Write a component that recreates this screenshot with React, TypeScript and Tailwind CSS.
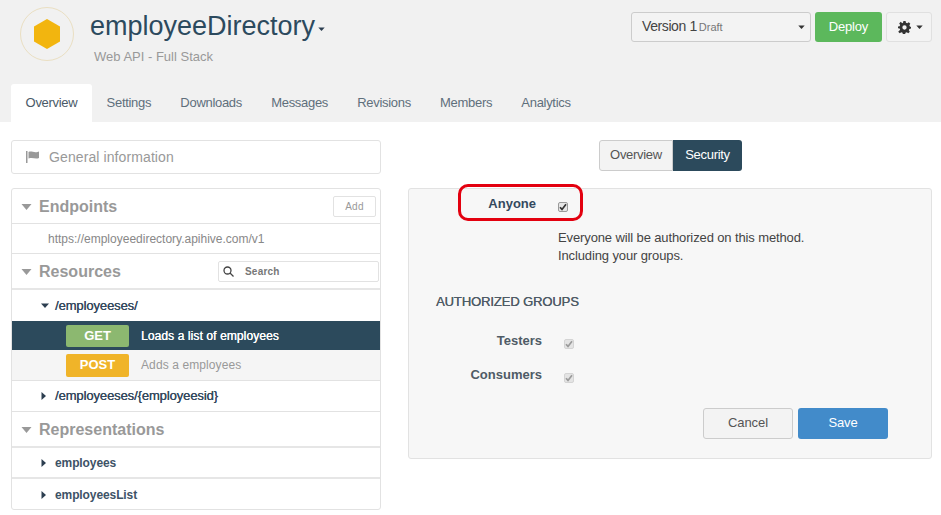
import React from "react";

const Caret = ({ dir = "down", className = "" }: { dir?: "down" | "right"; className?: string }) =>
  dir === "down" ? (
    <svg width="8" height="5" viewBox="0 0 8 5" className={className}><path d="M0 0.5h8L4 5z" fill="currentColor" /></svg>
  ) : (
    <svg width="5" height="8" viewBox="0 0 5 8" className={className}><path d="M0.5 0v8L5 4z" fill="currentColor" /></svg>
  );

const SectionCaret = () => (
  <svg width="11" height="6" viewBox="0 0 11 6" className="text-[#999]"><path d="M0.5 0h10L5.500 6z" fill="currentColor" /></svg>
);

const Check = ({ disabled }: { disabled?: boolean }) => (
  <span className={`flex h-[10px] w-[10px] items-center justify-center rounded-[2px] border ${disabled ? "border-[#d4d4d4] bg-[#e4e4e4]" : "border-[#9a9a9a] bg-[#e6e6e6]"}`}>
    <svg width="8" height="8" viewBox="0 0 8 8"><path d="M1 4.200 3 6.400 7 1.200" fill="none" stroke={disabled ? "#9b9b9b" : "#333"} strokeWidth="1.700" /></svg>
  </span>
);

const tabs = ["Overview", "Settings", "Downloads", "Messages", "Revisions", "Members", "Analytics"];

const Tree = ({ label, open, bold }: { label: string; open?: boolean; bold?: boolean }) => (
  <div className="flex h-full items-center pl-[29px] text-[#34495e]">
    <span className="flex w-[14px] items-center text-[#2c3e50]"><Caret dir={open ? "down" : "right"} /></span>
    <span className={bold ? "text-[12px] font-bold tracking-[-0.1px] text-[#3d5266]" : "text-[13px] tracking-[-0.1px] [text-shadow:0.2px_0_0_#34495e]"}>{label}</span>
  </div>
);

const SectionTitle = ({ label }: { label: string }) => (
  <div className="flex items-center pt-[1px]">
    <span className="ml-[9px] flex w-[18px]"><SectionCaret /></span>
    <span className="text-[16px] font-bold text-[#999]">{label}</span>
  </div>
);

export default function App() {
  return (
    <div className="h-[515px] w-[941px] overflow-hidden bg-white font-['Liberation_Sans',Arial,sans-serif] text-[#333]">
      <header className="h-[122px] bg-[#f1f1f1]">
        <div className="flex h-[84px]">
          <div className="ml-[20px] mt-[7px] flex h-[54px] w-[54px] items-center justify-center rounded-full border border-[#eadfc2]">
            <svg width="26" height="30" viewBox="0 0 26 30"><path d="M13 0 26 7.500v15L13 30 0 22.500V7.500z" fill="#f2b50f" /></svg>
          </div>
          <div className="ml-[16px] flex flex-col">
            <div className="mt-[8px] flex items-center">
              <span className="text-[27px] leading-[36px] text-[#2c4a5e]">employeeDirectory</span>
              <span className="ml-[3px] mt-[5px] text-[#2c3e50]"><Caret className="h-[4px] w-[7px]" /></span>
            </div>
            <span className="ml-[4px] mt-[4px] text-[13px] leading-[18px] text-[#999]">Web API - Full Stack</span>
          </div>
          <div className="ml-auto mr-[9px] mt-[12px] flex h-[30px] gap-[4px]">
            <div className="flex w-[180px] items-center rounded-[3px] border border-[#ccc] bg-[#f3f3f3] pb-[1px] pl-[10px] pr-[5px]">
              <span className="text-[14px] tracking-[-0.4px] text-[#444]">Version 1</span>
              <span className="ml-[2px] mt-[1px] text-[11px] text-[#777]">Draft</span>
              <span className="ml-auto text-[#333]"><Caret className="h-[4px] w-[7px]" /></span>
            </div>
            <div className="flex w-[67px] items-center justify-center rounded-[3px] bg-[#5cb85c] text-[13px] tracking-[-0.2px] text-white">Deploy</div>
            <div className="flex w-[46px] items-center justify-center gap-[5px] rounded-[3px] border border-[#e0e0e0] bg-[#f3f3f3] pl-[2px] text-[#333]">
              <svg width="13" height="13" viewBox="0 0 24 24" fill="#333"><path fillRule="evenodd" d="M10 0h4l.7 3.300 2.300 1 2.900-1.800 2.800 2.800L21 8l1 2.300 2 .7v3l-3 .7-1 2.300 1.800 2.900-2.800 2.800-2.900-1.800-2.300 1-.7 3.100h-4l-.7-3.100-2.300-1-2.900 1.800-2.800-2.800L4 16.300l-1-2.300-3-.7v-3l3-.7 1-2.300-1.800-2.900 2.800-2.800L7.900 4.300l1.400-1zM12 8a4 4 0 1 0 0 8 4 4 0 0 0 0-8z" /></svg>
              <Caret className="h-[4px] w-[7px]" />
            </div>
          </div>
        </div>
        <nav className="flex h-[38px] pl-[11px] text-[13px] tracking-[-0.3px] text-[#5f6f7c]">
          {tabs.map((t, i) => (
            <div key={t} className={`flex items-center rounded-t-[3px] ${i === 0 ? "w-[81px] justify-center bg-white text-[#4a5a68]" : "px-[14.600px]"}`}>{t}</div>
          ))}
        </nav>
      </header>

      <main className="flex pl-[11px] pt-[18px]">
        <aside className="w-[370px]">
          <div className="flex h-[34px] items-center rounded-[3px] border border-[#e2e2e2] pl-[14px] text-[14px] tracking-[0.1px] text-[#999]">
            <svg width="14" height="12" viewBox="0 0 14 12" fill="#999"><path d="M0 0h1.500v12H0zM2.500 1c3-1.500 5 1 9 0l1.500-.5V7c-4 1.500-6-1-10.500.5z" /></svg>
            <span className="ml-[9px]">General information</span>
          </div>
          <div className="mt-[14px] h-[322px] overflow-hidden rounded-[3px] border border-[#e2e2e2]">
            <div className="flex h-[35px] items-center justify-between border-b border-[#e2e2e2] pr-[4px]">
              <SectionTitle label="Endpoints" />
              <div className="flex h-[21px] w-[43px] items-center justify-center rounded-[2px] border border-[#e2e2e2] text-[10px] tracking-[0.3px] text-[#999]">Add</div>
            </div>
            <div className="flex h-[30px] items-center border-b border-[#e2e2e2] pl-[36px] text-[12px] text-[#888]">https://employeedirectory.apihive.com/v1</div>
            <div className="flex h-[36px] items-center justify-between border-b-[2px] border-[#e6e6e6] pr-[1px]">
              <SectionTitle label="Resources" />
              <div className="flex h-[21px] w-[161px] items-center rounded-[2px] border border-[#e2e2e2] pl-[4px] text-[10px] font-bold tracking-[0.2px] text-[#777]">
                <svg width="11" height="11" viewBox="0 0 11 11" fill="none" stroke="#444" strokeWidth="1.300"><circle cx="4.500" cy="4.500" r="3.500" /><path d="M7 7l3.500 3.500" /></svg>
                <span className="ml-[11px]">Search</span>
              </div>
            </div>
            <div className="h-[31px]"><Tree label="/employeeses/" open /></div>
            <div className="flex h-[29px] items-center bg-[#2c4a5c] pl-[54px]">
              <span className="flex h-[22px] w-[63px] items-center justify-center rounded-[2px] bg-[#8cb870] text-[13px] font-bold text-white">GET</span>
              <span className="ml-[12px] text-[12px] tracking-[0.1px] text-white [text-shadow:0.2px_0_0_#fff]">Loads a list of employees</span>
            </div>
            <div className="flex h-[31px] items-center border-b border-[#e2e2e2] bg-[#f5f5f5] pl-[54px]">
              <span className="flex h-[23px] w-[63px] items-center justify-center rounded-[2px] bg-[#f0b429] pb-[1px] text-[13px] font-bold text-white">POST</span>
              <span className="ml-[12px] text-[12px] tracking-[0.1px] text-[#999]">Adds a employees</span>
            </div>
            <div className="h-[31px] border-b border-[#e2e2e2]"><Tree label="/employeeses/{employeesid}" /></div>
            <div className="flex h-[36px] items-center border-b-[2px] border-[#e6e6e6]"><SectionTitle label="Representations" /></div>
            <div className="h-[31px] border-b-[2px] border-[#e6e6e6]"><Tree label="employees" bold /></div>
            <div className="h-[30px] pt-[2px]"><Tree label="employeesList" bold /></div>
          </div>
        </aside>

        <section className="ml-[27px] w-[524px]">
          <div className="flex justify-center pl-[1px] text-[13px] tracking-[-0.3px]">
            <div className="flex h-[31px] w-[74px] items-center justify-center rounded-l-[3px] border border-[#ccc] bg-[#f3f3f3] pb-[2px] text-[#555]">Overview</div>
            <div className="flex h-[31px] w-[69px] items-center justify-center rounded-r-[3px] bg-[#2c4a5c] pb-[2px] text-white">Security</div>
          </div>
          <div className="relative mt-[17px] h-[271px] rounded-[3px] border border-[#e2e2e2] bg-[#f7f7f7] text-[12px]">
            <div className="flex h-[32px] items-center">
              <span className="mb-[2px] w-[127px] text-right text-[13px] font-bold text-[#34495e]">Anyone</span>
              <span className="ml-[22px] mt-[3px]"><Check /></span>
            </div>
            <div className="absolute left-[49px] top-[-5px] h-[37px] w-[125px] rounded-[10px] border-[3px] border-[#e3000f]" />
            <p className="ml-[149px] mt-[8px] text-[13px] leading-[18px] tracking-[-0.12px] text-[#444]">Everyone will be authorized on this method.<br />Including your groups.</p>
            <h3 className="ml-[27px] mt-[28px] text-[13px] font-normal leading-[18px] tracking-[-0.1px] text-[#4f5b66] [text-shadow:0.2px_0_0_#4f5b66]">AUTHORIZED GROUPS</h3>
            <div className="mt-[20px] flex h-[20px] items-center">
              <span className="w-[133px] text-right text-[13px] font-bold text-[#4f5b66]">Testers</span>
              <span className="ml-[22px] mt-[6px]"><Check disabled /></span>
            </div>
            <div className="mt-[14px] flex h-[20px] items-center">
              <span className="w-[133px] text-right text-[13px] font-bold text-[#4f5b66]">Consumers</span>
              <span className="ml-[22px] mt-[6px]"><Check disabled /></span>
            </div>
            <div className="mt-[23px] mr-[43px] flex justify-end gap-[5px] text-[13px]">
              <div className="flex h-[31px] w-[90px] items-center justify-center rounded-[3px] border border-[#ccc] bg-[#f3f3f3] pb-[1px] tracking-[-0.1px] text-[#555]">Cancel</div>
              <div className="flex h-[31px] w-[90px] items-center justify-center rounded-[3px] bg-[#428bca] pb-[1px] tracking-[-0.1px] text-white">Save</div>
            </div>
          </div>
        </section>
      </main>
    </div>
  );
}
